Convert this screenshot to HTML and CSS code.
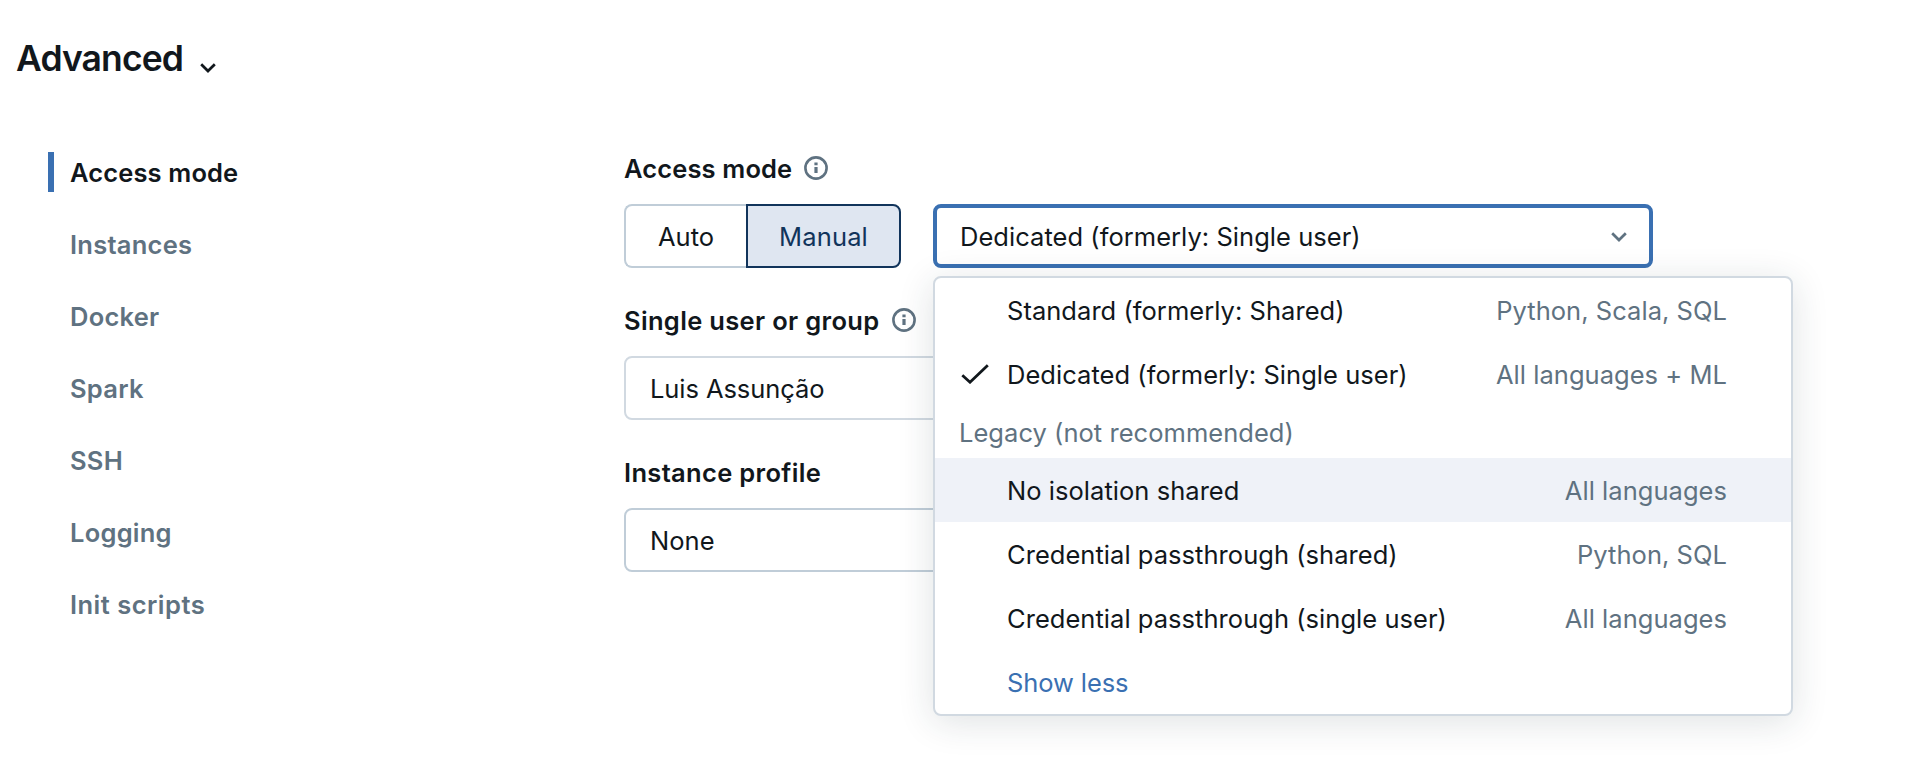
FILE: index.html
```
<!DOCTYPE html>
<html lang="en">
<head>
<meta charset="utf-8">
<title>Advanced</title>
<link rel="stylesheet" href="styles.css">
</head>
<body>
<main class="page">
  <h1 class="title"><span>Advanced</span>
    <svg class="title-chevron" width="16" height="10" viewBox="0 0 16 10"><path d="M1.2 1.2 8 8 14.8 1.2"/></svg>
  </h1>
  <div class="columns">
    <nav class="nav">
      <a class="nav-item active">Access mode</a>
      <a class="nav-item">Instances</a>
      <a class="nav-item">Docker</a>
      <a class="nav-item">Spark</a>
      <a class="nav-item">SSH</a>
      <a class="nav-item">Logging</a>
      <a class="nav-item loose">Init scripts</a>
    </nav>
    <form class="form">
      <section class="field">
        <div class="label tight"><span>Access mode</span>
          <svg class="info" width="24" height="24" viewBox="0 0 24 24"><circle cx="12" cy="12" r="10.6"/><path d="M10.4 11h3.2v6h-3.2zM10.4 6.6h3.2v2.6h-3.2z"/></svg>
        </div>
        <div class="controls">
          <div class="segment">
            <span class="segment-auto">Auto</span>
            <span class="segment-manual">Manual</span>
          </div>
          <div class="select">
            <span class="select-value">Dedicated (formerly: Single user)</span>
            <svg class="select-chevron" width="16" height="10" viewBox="0 0 16 10"><path d="M1.2 1.2 8 8 14.8 1.2"/></svg>
            <div class="menu">
              <div class="option"><span class="name">Standard (formerly: Shared)</span><span class="hint">Python, Scala, SQL</span></div>
              <div class="option"><svg class="check" width="28" height="20" viewBox="0 0 28 20"><path d="M1.3 11.2 9 18.2 26.8 1.2"/></svg><span class="name">Dedicated (formerly: Single user)</span><span class="hint">All languages + ML</span></div>
              <div class="group">Legacy (not recommended)</div>
              <div class="option hovered"><span class="name">No isolation shared</span><span class="hint">All languages</span></div>
              <div class="option"><span class="name">Credential passthrough (shared)</span><span class="hint">Python, SQL</span></div>
              <div class="option"><span class="name">Credential passthrough (single user)</span><span class="hint">All languages</span></div>
              <div class="option"><span class="name link">Show less</span></div>
            </div>
          </div>
        </div>
      </section>
      <section class="field">
        <div class="label"><span>Single user or group</span>
          <svg class="info" width="24" height="24" viewBox="0 0 24 24"><circle cx="12" cy="12" r="10.6"/><path d="M10.4 11h3.2v6h-3.2zM10.4 6.6h3.2v2.6h-3.2z"/></svg>
        </div>
        <div class="input light">Luis Assunção</div>
      </section>
      <section class="field">
        <div class="label"><span>Instance profile</span></div>
        <div class="input">None</div>
      </section>
    </form>
  </div>
</main>
</body>
</html>
```
FILE: styles.css
```
* { box-sizing: border-box; }
body {
  margin: 0;
  background: #fff;
  color: #11171c;
  font: 400 25.5px/40px Inter, "Liberation Sans", sans-serif;
  letter-spacing: 0.04px;
  white-space: nowrap;
}
.page { height: 774px; overflow: hidden; padding: 34px 0 0 16px; }
.title {
  display: flex;
  align-items: center;
  gap: 17px;
  margin: 0;
  height: 48px;
  font-size: 35.5px;
  font-weight: 600;
  letter-spacing: -0.9px;
}
.title span { padding-top: 2px; }
.title-chevron { margin-top: 20px; fill: none; stroke: #11171c; stroke-width: 2.7; }
.columns { display: flex; padding: 70px 0 0 32px; }
.nav { display: flex; flex-direction: column; gap: 32px; width: 576px; }
.nav-item {
  height: 40px;
  padding-left: 16px;
  border-left: 6px solid transparent;
  color: #5f7281;
  font-weight: 600;
  letter-spacing: 0.25px;
  line-height: 42px;
}
.nav-item.active { border-color: #3a70b2; color: #11171c; letter-spacing: 0.13px; }
.nav-item.loose { letter-spacing: 0.48px; }
.form { display: flex; flex-direction: column; gap: 32px; }
.field { display: flex; flex-direction: column; gap: 16px; height: 120px; }
.field:first-child { height: 116px; }
.label {
  display: flex;
  align-items: center;
  gap: 13px;
  height: 40px;
  font-weight: 600;
  letter-spacing: 0.33px;
}
.label span { padding-top: 2px; }
.label.tight { margin-top: -4px; letter-spacing: 0.13px; gap: 12px; }
.info { fill: none; stroke: #5f7281; stroke-width: 2.6; }
.info path { fill: #5f7281; stroke: none; }
.controls { display: flex; gap: 32px; }
.segment { display: flex; width: 277px; height: 64px; text-align: center; }
.segment-auto { width: 122px; line-height: 62px; border: 2px solid #c0cdd8; border-right: 0; border-radius: 8px 0 0 8px; }
.segment-manual { width: 155px; line-height: 62px; border: 2px solid #11345b; border-radius: 0 8px 8px 0; background: #dfe6f1; color: #11345b; letter-spacing: 0.15px; }
.select {
  position: relative;
  display: flex;
  align-items: center;
  justify-content: space-between;
  width: 720px;
  height: 64px;
  padding: 0 22px 0 23px;
  border: 4px solid #3a70b2;
  border-radius: 8px;
}
.select-value { padding-top: 2px; }
.select-chevron { margin-top: 2px; fill: none; stroke: #5f7281; stroke-width: 2.7; }
.menu {
  position: absolute;
  z-index: 2;
  top: 68px;
  left: -4px;
  width: 860px;
  border: 2px solid #d1d9e1;
  border-radius: 8px;
  background: #fff;
  box-shadow: 0 6px 36px rgba(27, 49, 57, 0.14);
}
.option {
  display: grid;
  grid-template-columns: 46px 1fr auto;
  align-items: center;
  height: 64px;
  padding: 0 64px 0 26px;
}
.name { grid-column: 2; grid-row: 1; padding-top: 2px; }
.hint { grid-column: 3; padding-top: 2px; color: #5f7281; }
.check { fill: none; stroke: #11171c; stroke-width: 2.8; }
.group { height: 52px; padding: 7px 24px 0; color: #5f7281; }
.hovered { background: #eff2f8; }
.link { color: #3a70b2; letter-spacing: -0.1px; }
.input {
  width: 720px;
  height: 64px;
  padding-left: 24px;
  border: 2px solid #c0cdd8;
  border-radius: 8px;
  line-height: 62px;
}
.input.light { border-color: #d1d9e1; letter-spacing: -0.08px; }
```
